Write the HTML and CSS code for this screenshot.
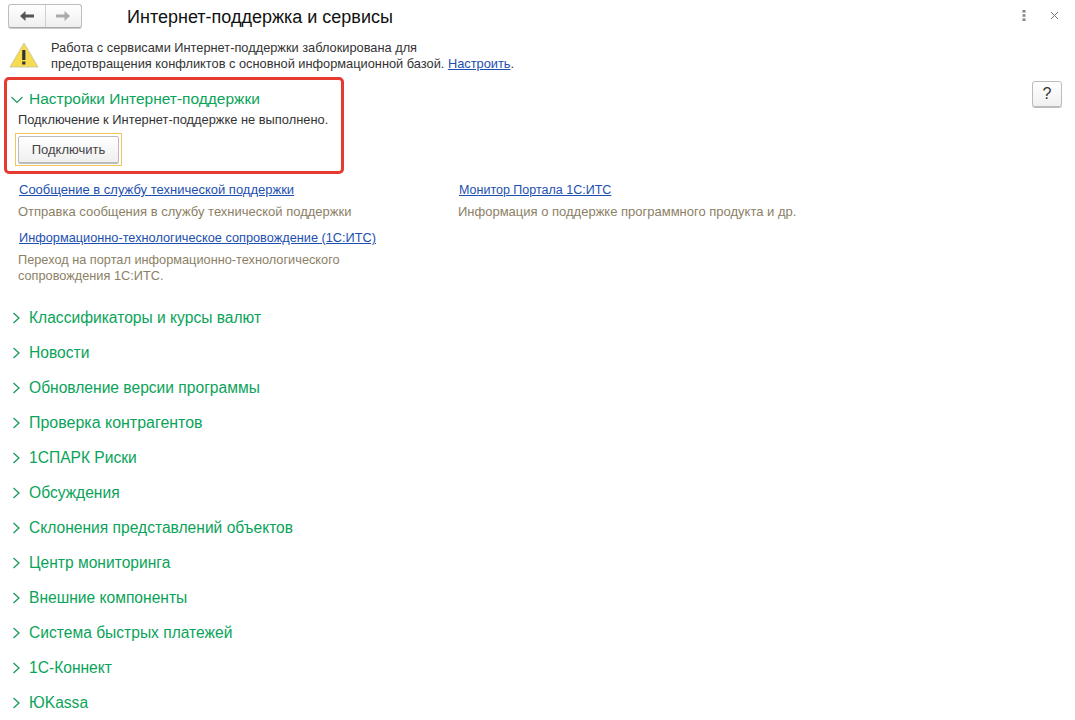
FILE: index.html
```html
<!DOCTYPE html>
<html lang="ru">
<head>
<meta charset="utf-8">
<title>Интернет-поддержка и сервисы</title>
<link rel="stylesheet" href="styles.css">
</head>
<body>
<div class="page">
  <header class="topbar">
    <div class="nav">
      <button class="nav-btn"><svg width="16" height="12" viewBox="0 0 16 12"><path d="M1 6 L6.5 1 V4.5 H15 V7.5 H6.5 V11 Z" fill="#555"/></svg></button>
      <button class="nav-btn"><svg width="16" height="12" viewBox="0 0 16 12"><path d="M15 6 L9.5 1 V4.5 H1 V7.5 H9.5 V11 Z" fill="#aaa"/></svg></button>
    </div>
    <h1 class="title">Интернет-поддержка и сервисы</h1>
    <div class="win-tools">
      <svg width="4" height="11" viewBox="0 0 4 11"><rect x="0.5" y="0" width="3" height="2.6" fill="#888"/><rect x="0.5" y="4.2" width="3" height="2.6" fill="#888"/><rect x="0.5" y="8.4" width="3" height="2.6" fill="#888"/></svg>
      <svg width="9" height="9" viewBox="0 0 9 9"><path d="M1 1 L8 8 M8 1 L1 8" stroke="#777" stroke-width="1" fill="none"/></svg>
    </div>
  </header>

  <div class="warning">
    <svg class="warn-icon" width="30" height="26" viewBox="0 0 30 26"><path d="M15 1 L29 25 H1 Z" fill="#f6dc4e" stroke="#cfc9a0" stroke-width="1" stroke-linejoin="round"/><rect x="13.2" y="8" width="3.2" height="10" fill="#333"/><rect x="13.2" y="19.5" width="3.2" height="3" fill="#333"/></svg>
    <p class="warn-text">Работа с сервисами Интернет-поддержки заблокирована для<br>предотвращения конфликтов с основной информационной базой. <a href="#">Настроить</a>.</p>
  </div>

  <div class="settings-row">
    <section class="settings">
      <div class="group open">
        <svg class="chev" width="12" height="12" viewBox="0 0 12 12"><path d="M0.5 4 L6 9.5 L11.5 4" fill="none" stroke="#1a9a5a" stroke-width="1.2"/></svg>
        <span>Настройки Интернет-поддержки</span>
      </div>
      <p class="status">Подключение к Интернет-поддержке не выполнено.</p>
      <div class="focus"><button class="connect">Подключить</button></div>
    </section>
    <button class="help">?</button>
  </div>

  <div class="links">
    <div class="col col-left">
      <a href="#">Сообщение в службу технической поддержки</a>
      <p>Отправка сообщения в службу технической поддержки</p>
      <a class="tight" href="#">Информационно-технологическое сопровождение (1С:ИТС)</a>
      <p class="tight">Переход на портал информационно-технологического<br>сопровождения 1С:ИТС.</p>
    </div>
    <div class="col">
      <a class="tighter" href="#">Монитор Портала 1С:ИТС</a>
      <p>Информация о поддержке программного продукта и др.</p>
    </div>
  </div>

  <nav class="groups">
    <div class="group"><svg class="chev" width="12" height="12" viewBox="0 0 12 12"><path d="M2.5 1 L8 6 L2.5 11" fill="none" stroke="#1a9a5a" stroke-width="1.3"/></svg><span>Классификаторы и курсы валют</span></div>
    <div class="group"><svg class="chev" width="12" height="12" viewBox="0 0 12 12"><path d="M2.5 1 L8 6 L2.5 11" fill="none" stroke="#1a9a5a" stroke-width="1.3"/></svg><span>Новости</span></div>
    <div class="group"><svg class="chev" width="12" height="12" viewBox="0 0 12 12"><path d="M2.5 1 L8 6 L2.5 11" fill="none" stroke="#1a9a5a" stroke-width="1.3"/></svg><span>Обновление версии программы</span></div>
    <div class="group wide"><svg class="chev" width="12" height="12" viewBox="0 0 12 12"><path d="M2.5 1 L8 6 L2.5 11" fill="none" stroke="#1a9a5a" stroke-width="1.3"/></svg><span>Проверка контрагентов</span></div>
    <div class="group"><svg class="chev" width="12" height="12" viewBox="0 0 12 12"><path d="M2.5 1 L8 6 L2.5 11" fill="none" stroke="#1a9a5a" stroke-width="1.3"/></svg><span>1СПАРК Риски</span></div>
    <div class="group"><svg class="chev" width="12" height="12" viewBox="0 0 12 12"><path d="M2.5 1 L8 6 L2.5 11" fill="none" stroke="#1a9a5a" stroke-width="1.3"/></svg><span>Обсуждения</span></div>
    <div class="group"><svg class="chev" width="12" height="12" viewBox="0 0 12 12"><path d="M2.5 1 L8 6 L2.5 11" fill="none" stroke="#1a9a5a" stroke-width="1.3"/></svg><span>Склонения представлений объектов</span></div>
    <div class="group"><svg class="chev" width="12" height="12" viewBox="0 0 12 12"><path d="M2.5 1 L8 6 L2.5 11" fill="none" stroke="#1a9a5a" stroke-width="1.3"/></svg><span>Центр мониторинга</span></div>
    <div class="group"><svg class="chev" width="12" height="12" viewBox="0 0 12 12"><path d="M2.5 1 L8 6 L2.5 11" fill="none" stroke="#1a9a5a" stroke-width="1.3"/></svg><span>Внешние компоненты</span></div>
    <div class="group"><svg class="chev" width="12" height="12" viewBox="0 0 12 12"><path d="M2.5 1 L8 6 L2.5 11" fill="none" stroke="#1a9a5a" stroke-width="1.3"/></svg><span>Система быстрых платежей</span></div>
    <div class="group"><svg class="chev" width="12" height="12" viewBox="0 0 12 12"><path d="M2.5 1 L8 6 L2.5 11" fill="none" stroke="#1a9a5a" stroke-width="1.3"/></svg><span>1С-Коннект</span></div>
    <div class="group"><svg class="chev" width="12" height="12" viewBox="0 0 12 12"><path d="M2.5 1 L8 6 L2.5 11" fill="none" stroke="#1a9a5a" stroke-width="1.3"/></svg><span>ЮKassa</span></div>
  </nav>
</div>
</body>
</html>
```
FILE: styles.css
```css
* { box-sizing: border-box; }
html, body { margin: 0; padding: 0; background: #fff; height: 100%; overflow: hidden; }
body { font-family: "Liberation Sans", Arial, sans-serif; color: #333; }
.page { width: 1075px; height: 720px; overflow: hidden; }
p { margin: 0; }
button { font-family: inherit; cursor: pointer; }

.topbar { display: flex; align-items: center; height: 36px; padding: 0 16px 4px 8px; }
.nav { display: flex; width: 74px; height: 24px; border: 1px solid #bdbdbd; border-bottom-color: #a8a8a8; border-radius: 3px; background: linear-gradient(#fff, #efefef); box-shadow: 0 1px 0 #ccc; }
.nav-btn { flex: 1; padding: 0; border: 0; background: none; display: flex; align-items: center; justify-content: center; }
.nav-btn + .nav-btn { border-left: 1px solid #d0d0d0; }
.title { margin: 2px 0 0 45px; font-size: 18px; font-weight: 400; color: #111; flex: 1; }
.win-tools { display: flex; align-items: center; gap: 24px; margin-bottom: 2px; }

.warning { display: flex; align-items: center; gap: 12px; padding-left: 9px; height: 39px; }
.warn-icon { margin-top: -1px; }
.warn-text { font-size: 12.8px; line-height: 16px; color: #333; }
.warn-text a, .links a { color: #1c4fb0; text-decoration: underline; }

.settings-row { display: flex; justify-content: space-between; align-items: flex-start; padding: 2px 13px 0 4px; }
.settings { width: 340px; height: 97px; border: 3px solid #e53a30; border-radius: 5px; padding: 9px 0 0 4px; }
.group { display: flex; align-items: center; gap: 6px; font-size: 15.6px; line-height: 20px; color: #0aa35a; }
.group.open { font-size: 15.5px; }
.group.wide { font-size: 15.97px; }
.group .chev { flex: none; }
.status { font-size: 12.87px; line-height: 16px; margin: 3px 0 0 7px; color: #333; }
.focus { width: 107px; height: 33px; margin: 5px 0 0 4px; border: 1px solid #f3c65a; padding: 2px; }
.connect { width: 100%; height: 100%; padding: 0; font-size: 13px; color: #444; border: 1px solid #bbb; border-radius: 2px; background: linear-gradient(#fff, #efefef); box-shadow: 0 1px 0 #bbb; }
.help { width: 30px; height: 26px; margin-top: 4px; padding: 0; font-size: 16px; color: #333; border: 1px solid #bbb; border-radius: 3px; background: linear-gradient(#fff, #f0f0f0); box-shadow: 0 1px 0 #bbb; }

.links { display: flex; padding: 8px 0 0 18px; font-size: 13px; }
.col { display: flex; flex-direction: column; align-items: flex-start; }
.col-left { width: 440px; }
.col a { margin-left: 1px; line-height: 16px; }
.col p { color: #8c7f66; line-height: 16px; margin-top: 6px; margin-bottom: 10px; }
.col .tight { font-size: 12.75px; }
.col .tighter { font-size: 12.5px; }

.groups { display: flex; flex-direction: column; gap: 15px; padding: 14px 0 0 11px; }
.groups .group { height: 20px; }
```
